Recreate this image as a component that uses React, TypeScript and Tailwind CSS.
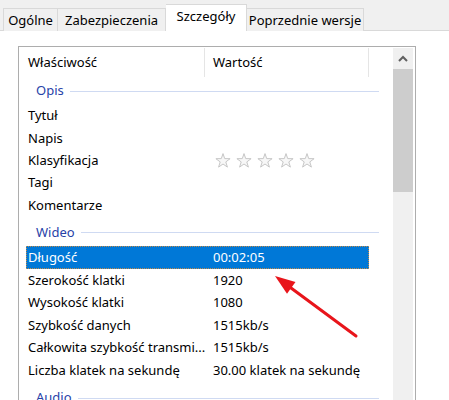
import React from "react";

const Star = () => (
  <svg width="16" height="15" viewBox="0 0 16 15">
    <polygon
      points="8,0.6 9.7,5.6 15.1,5.7 10.8,8.9 12.4,14.1 8,11 3.6,14.1 5.2,8.9 0.9,5.7 6.3,5.6"
      fill="#f7f7f7"
      stroke="#c6c6c6"
      strokeWidth="1"
      strokeLinejoin="round"
    />
  </svg>
);

type Row = { p: string; v?: React.ReactNode; sel?: boolean; h: string };

const Item = ({ p, v, sel, h }: Row) => (
  <div className={`flex ${h}`}>
    <div
      className={`ml-[7px] w-[343px] flex items-center ${
        sel ? "bg-[#0078d7] text-white outline-1 outline-dotted outline-[#c08a4a] -outline-offset-1" : "text-black"
      }`}
    >
      <div className="w-[179px] pl-[2px] whitespace-nowrap overflow-hidden">{p}</div>
      <div className="pl-[8px] whitespace-nowrap flex items-center">{v}</div>
    </div>
  </div>
);

const Group = ({ t, cls }: { t: string; cls: string }) => (
  <div className={`flex items-center ml-[17px] w-[343px] ${cls}`}>
    <span className="text-[#2742a8]">{t}</span>
    <div className="flex-1 h-px bg-[#cfdaf2] ml-[6px]" />
  </div>
);

export default function App() {
  return (
    <div className="w-[449px] h-[400px] bg-white overflow-hidden relative font-['Noto_Sans',sans-serif] text-[13px] text-black">
      {/* tab strip */}
      <div className="h-[31px] bg-[#f0f0f0] border-b border-[#d9d9d9] flex items-end pl-[3px]">
        <div className="w-[55px] h-[23px] border border-b-0 border-[#d9d9d9] bg-[#f0f0f0] flex items-center justify-center pt-[1px] -mb-px">
          Ogólne
        </div>
        <div className="w-[108px] h-[23px] border border-b-0 border-l-0 border-[#d9d9d9] bg-[#f0f0f0] flex items-center justify-center pt-[1px] -mb-px">
          Zabezpieczenia
        </div>
        <div className="w-[81px] h-[27px] border border-b-0 border-l-0 border-[#d9d9d9] bg-white flex items-center justify-center pb-[3px] -mb-px relative z-10">
          Szczegóły
        </div>
        <div className="w-[117px] h-[23px] border border-b-0 border-l-0 border-[#d9d9d9] bg-[#f0f0f0] flex items-center justify-center pt-[1px] -mb-px">
          Poprzednie wersje
        </div>
      </div>

      {/* list box */}
      <div className="ml-[18px] mt-[15px] w-[398px] h-[400px] border border-[#adadad] flex">
        <div className="w-[374px] flex flex-col">
          {/* header */}
          <div className="h-[30px] flex shrink-0">
            <div className="w-[186px] pl-[9px] flex items-center border-r border-[#e5e5e5] mt-px">Właściwość</div>
            <div className="w-[164px] pl-[8px] flex items-center border-r border-[#e5e5e5] mt-px">Wartość</div>
          </div>
          <Group t="Opis" cls="h-[28px]" />
          <Item p="Tytuł" h="h-[22.3px]" />
          <Item p="Napis" h="h-[22.3px]" />
          <Item
            p="Klasyfikacja"
            h="h-[22.3px]"
            v={
              <div className="flex gap-[5px] ml-[2px]">
                <Star />
                <Star />
                <Star />
                <Star />
                <Star />
              </div>
            }
          />
          <Item p="Tagi" h="h-[22.3px]" />
          <Item p="Komentarze" h="h-[22.3px]" />
          <Group t="Wideo" cls="h-[28px] mt-[2px]" />
          <Item p="Długość" v="00:02:05" sel h="h-[22.6px]" />
          <Item p="Szerokość klatki" v="1920" h="h-[22.6px]" />
          <Item p="Wysokość klatki" v="1080" h="h-[22.6px]" />
          <Item p="Szybkość danych" v="1515kb/s" h="h-[22.6px]" />
          <Item p="Całkowita szybkość transmi..." v="1515kb/s" h="h-[22.6px]" />
          <Item p="Liczba klatek na sekundę" v="30.00 klatek na sekundę" h="h-[22.6px]" />
          <Group t="Audio" cls="h-[28px] mt-[2px]" />
        </div>
        {/* scrollbar */}
        <div className="w-[20px] bg-[#f0f0f0] flex flex-col mt-px">
          <div className="h-[21px] flex items-center justify-center">
            <svg width="10" height="7" viewBox="0 0 10 7">
              <polyline points="1,6 5,2 9,6" fill="none" stroke="#606060" strokeWidth="2" />
            </svg>
          </div>
          <div className="h-[123px] bg-[#cdcdcd]" />
        </div>
        <div className="w-[2px] bg-white" />
      </div>

      {/* red arrow */}
      <svg className="absolute left-0 top-0 pointer-events-none" width="449" height="400">
        <line x1="356" y1="336" x2="289" y2="286.5" stroke="#e8151b" strokeWidth="3" strokeLinecap="round" />
        <polygon points="275,276 295.5,282 287,293.8" fill="#e8151b" />
      </svg>
    </div>
  );
}
